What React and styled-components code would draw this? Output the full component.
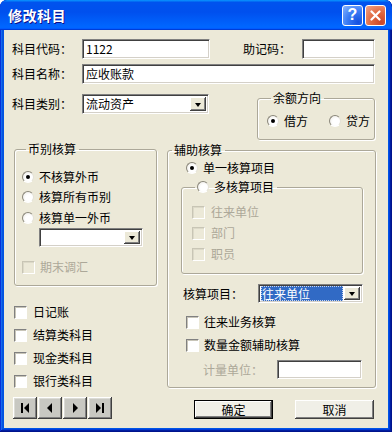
import React from 'react';
import styled, { createGlobalStyle } from 'styled-components';

const GlobalStyle = createGlobalStyle`
  html, body {
    margin: 0;
    padding: 0;
    background: #ffffff;
  }
  body {
    font-family: "Noto Sans CJK SC", "Liberation Sans", sans-serif;
    font-size: 12px;
  }
  * {
    box-sizing: border-box;
  }
`;

const Window = styled.div`
  width: 392px;
  height: 432px;
  display: flex;
  flex-direction: column;
  background: #0055e5;
  border-radius: 7px 7px 0 0;
  overflow: hidden;
  box-shadow: inset -1px -1px #00138c, inset 1px 1px #0831d9, inset -2px -2px #001ea0,
    inset 2px 2px #166aee, inset -3px -3px #003bda, inset 3px 3px #0855dd;
`;

const TitleBar = styled.div`
  height: 30px;
  flex: none;
  display: flex;
  align-items: center;
  padding: 0 6px 0 8px;
  background: linear-gradient(180deg, #0997ff, #0053ee 8%, #0050ee 40%, #06f 88%, #06f 93%, #005bff 95%, #003dd7 96%, #003dd7);
  border-radius: 7px 7px 0 0;
`;

const Title = styled.span`
  flex: 1;
  color: #fff;
  font-size: 14px;
  font-weight: 700;
  letter-spacing: 0.5px;
  text-shadow: 1px 1px #0f1089;
`;

const CapButton = styled.div`
  width: 21px;
  height: 21px;
  margin-left: 2px;
  border: 1px solid #fff;
  border-radius: 3px;
  display: flex;
  align-items: center;
  justify-content: center;
  color: #fff;
  font-family: "Liberation Sans", sans-serif;
  font-weight: 700;
  font-size: 16px;
  background: ${({ $close }) =>
    $close
      ? 'radial-gradient(circle at 80% 85%, #cc4628 0%, #e0683f 45%, #f0a58a 100%)'
      : 'radial-gradient(circle at 80% 85%, #1450e0 0%, #3a7cf5 50%, #8ab6ff 100%)'};
`;

const Client = styled.div`
  flex: 1;
  margin: 0 4px 4px;
  background: #ece9d8;
  color: #000;
  display: flex;
  flex-direction: column;
`;

const Row = styled.div`
  display: flex;
  align-items: center;
  height: ${({ $h }) => $h || 20}px;
  margin-top: ${({ $mt }) => $mt || 0}px;
  padding-left: ${({ $pl }) => $pl || 0}px;
  flex: none;
`;

const Label = styled.span`
  width: ${({ $w }) => ($w ? `${$w}px` : 'auto')};
  margin-left: ${({ $ml }) => $ml || 0}px;
  color: ${({ $disabled }) => ($disabled ? '#aca899' : '#000')};
  white-space: nowrap;
  line-height: 14px;
`;

const TextInput = styled.div`
  width: ${({ $w }) => $w}px;
  height: ${({ $h }) => $h || 20}px;
  margin-left: ${({ $ml }) => $ml || 0}px;
  background: #fff;
  border-top: 1px solid #808080;
  border-left: 1px solid #808080;
  border-right: 1px solid #fff;
  border-bottom: 1px solid #fff;
  box-shadow: inset 1px 1px #404040, inset -1px -1px #d4d0c8;
  padding: 0 3px;
  display: flex;
  align-items: center;
  font-size: 12px;
  line-height: 14px;
`;

const ComboBox = styled(TextInput)`
  padding: 2px;
  justify-content: space-between;
`;

const ComboValue = styled.span`
  flex: 1;
  align-self: stretch;
  display: flex;
  align-items: center;
  padding: 0 1px;
  margin: -1px 0;
  font-size: 12px;
  line-height: 12px;
  white-space: nowrap;
  ${({ $selected }) =>
    $selected &&
    `
    background: #316ac5;
    color: #fff;
    outline: 1px dotted #c9d6ee;
    outline-offset: -1px;
  `}
`;

const ComboArrow = styled.span`
  width: 16px;
  align-self: stretch;
  margin-left: 1px;
  background: #ece9d8;
  box-shadow: inset -1px -1px #404040, inset 1px 1px #fff, inset -2px -2px #808080, inset 2px 2px #ece9d8;
  display: flex;
  align-items: center;
  justify-content: center;
  &::after {
    content: '';
    border-left: 3.5px solid transparent;
    border-right: 3.5px solid transparent;
    border-top: 4px solid #000;
    margin-top: 1px;
  }
`;

const Combo = ({ w, h, ml, value, selected }) => (
  <ComboBox $w={w} $h={h} $ml={ml}>
    <ComboValue $selected={selected}>{value}</ComboValue>
    <ComboArrow />
  </ComboBox>
);

const Group = styled.fieldset`
  margin: ${({ $mt }) => $mt || 0}px 0 0 ${({ $ml }) => $ml || 0}px;
  width: ${({ $w }) => $w}px;
  height: ${({ $h }) => $h}px;
  min-inline-size: 0;
  padding: ${({ $pad }) => $pad || '0'};
  border: 1px solid #aca899;
  border-radius: 3px;
  box-shadow: 1px 1px #fff, inset 1px 1px #fff;
  display: flex;
  flex-direction: column;
  flex: none;
`;

const Legend = styled.legend`
  margin-left: ${({ $ml }) => $ml || 4}px;
  padding: 0 3px 0 2px;
  line-height: 14px;
  font-size: 12px;
  display: flex;
  align-items: center;
`;

const RadioCircle = styled.span`
  width: 12px;
  height: 12px;
  flex: none;
  border-radius: 50%;
  background: radial-gradient(circle at 60% 60%, #ffffff 40%, #e8e6de 100%);
  border: 1px solid;
  border-color: #8a877a #e4e2d8 #ffffff #8a877a;
  display: flex;
  align-items: center;
  justify-content: center;
  margin-right: 5px;
  &::after {
    content: '';
    width: 4px;
    height: 4px;
    border-radius: 50%;
    background: ${({ $on }) => ($on ? '#000' : 'transparent')};
  }
`;

const CheckSquare = styled.span`
  width: 13px;
  height: 13px;
  flex: none;
  background: ${({ $disabled }) => ($disabled ? '#ece9d8' : '#fff')};
  border-top: 1px solid ${({ $disabled }) => ($disabled ? '#c8c5b5' : '#808080')};
  border-left: 1px solid ${({ $disabled }) => ($disabled ? '#c8c5b5' : '#808080')};
  border-right: 1px solid #fff;
  border-bottom: 1px solid #fff;
  box-shadow: inset 1px 1px ${({ $disabled }) => ($disabled ? '#dcd9c8' : '#c8c5b8')};
  margin-right: ${({ $gap }) => $gap || 6}px;
`;

const Radio = ({ on, children, ml, mt }) => (
  <Row $pl={ml} $mt={mt}>
    <RadioCircle $on={on} />
    <Label>{children}</Label>
  </Row>
);

const Check = ({ disabled, children, ml, mt, gap }) => (
  <Row $pl={ml} $mt={mt}>
    <CheckSquare $disabled={disabled} $gap={gap} />
    <Label $disabled={disabled}>{children}</Label>
  </Row>
);

const TopRow = styled.div`
  display: flex;
  align-items: flex-start;
  margin-top: 7px;
  padding-left: 8px;
  flex: none;
`;

const Lower = styled.div`
  display: flex;
  align-items: flex-start;
  margin-top: 2px;
  padding-left: 10px;
  flex: 1;
`;

const Column = styled.div`
  display: flex;
  flex-direction: column;
  width: ${({ $w }) => $w}px;
  margin-left: ${({ $ml }) => $ml || 0}px;
  margin-top: ${({ $mt }) => $mt || 0}px;
`;

const NavBar = styled.div`
  display: flex;
  gap: 1px;
  margin-top: 6px;
  margin-left: -1px;
`;

const NavButton = styled.div`
  width: 24px;
  height: 22px;
  background: #c8c8c2;
  box-shadow: inset -1px -1px #404040, inset 1px 1px #fff, inset -2px -2px #808080, inset 2px 2px #dcdcd6;
  display: flex;
  align-items: center;
  justify-content: center;
`;

const ButtonRow = styled.div`
  display: flex;
  margin-top: 12px;
  padding-left: 27px;
  gap: 22px;
`;

const DlgButton = styled.div`
  width: 79px;
  height: 19px;
  background: #f0efe7;
  display: flex;
  align-items: center;
  justify-content: center;
  font-size: 12px;
  box-shadow: ${({ $default }) =>
    $default
      ? 'inset 0 0 0 1px #000, inset -2px -2px #404040, inset 2px 2px #fff, inset -3px -3px #808080'
      : 'inset -1px -1px #404040, inset 1px 1px #fff, inset -2px -2px #808080, inset 2px 2px #f0efe7'};
`;

const NavIcon = ({ kind }) => {
  const shapes = {
    first: (
      <>
        <rect x="1" y="1" width="2" height="10" />
        <polygon points="9,1 4,6 9,11" />
      </>
    ),
    prev: <polygon points="7,1 2,6 7,11" />,
    next: <polygon points="3,1 8,6 3,11" />,
    last: (
      <>
        <polygon points="1,1 6,6 1,11" />
        <rect x="7" y="1" width="2" height="10" />
      </>
    ),
  };
  return (
    <svg width="10" height="12" viewBox="0 0 10 12" fill="#000">
      {shapes[kind]}
    </svg>
  );
};

export default function App() {
  return (
    <>
      <GlobalStyle />
      <Window>
        <TitleBar>
          <Title>修改科目</Title>
          <CapButton>?</CapButton>
          <CapButton $close>
            <svg width="11" height="11" viewBox="0 0 11 11">
              <path d="M1.5 1.5 L9.5 9.5 M9.5 1.5 L1.5 9.5" stroke="#fff" strokeWidth="2.2" strokeLinecap="round" />
            </svg>
          </CapButton>
        </TitleBar>
        <Client>
          <Row $mt={9} $pl={8}>
            <Label $w={70}>科目代码：</Label>
            <TextInput $w={128}>1122</TextInput>
            <Label $ml={33} $w={59}>助记码：</Label>
            <TextInput $w={73} />
          </Row>
          <Row $mt={5} $pl={8}>
            <Label $w={70}>科目名称：</Label>
            <TextInput $w={293}>应收账款</TextInput>
          </Row>
          <TopRow>
            <Row $mt={3}>
              <Label $w={70}>科目类别：</Label>
              <Combo w={127} value="流动资产" />
            </Row>
            <Group $ml={48} $w={118} $h={49} $pad="6px 0 0 9px">
              <Legend>余额方向</Legend>
              <Row>
                <RadioCircle $on />
                <Label $w={45}>借方</Label>
                <RadioCircle />
                <Label>贷方</Label>
              </Row>
            </Group>
          </TopRow>
          <Lower>
            <Column $w={143}>
              <Group $w={143} $h={144} $pad="11px 0 0 7px">
                <Legend>币别核算</Legend>
                <Radio on>不核算外币</Radio>
                <Radio>核算所有币别</Radio>
                <Radio mt={1}>核算单一外币</Radio>
                <Combo w={104} h={19} ml={17} value="" />
                <Check disabled mt={10} gap={5}>期末调汇</Check>
              </Group>
              <Check mt={16} ml={-1}>日记账</Check>
              <Check mt={3} ml={-1}>结算类科目</Check>
              <Check mt={3} ml={-1}>现金类科目</Check>
              <Check mt={3} ml={-1}>银行类科目</Check>
              <NavBar>
                <NavButton><NavIcon kind="first" /></NavButton>
                <NavButton><NavIcon kind="prev" /></NavButton>
                <NavButton><NavIcon kind="next" /></NavButton>
                <NavButton><NavIcon kind="last" /></NavButton>
              </NavBar>
            </Column>
            <Column $w={209} $ml={10} $mt={1}>
              <Group $w={209} $h={245} $pad="1px 0 0 0">
                <Legend>辅助核算</Legend>
                <Radio on ml={18}>单一核算项目</Radio>
                <Group $ml={13} $mt={2} $w={182} $h={94} $pad="8px 0 0 10px">
                  <Legend $ml={3}>
                    <RadioCircle />
                    多核算项目
                  </Legend>
                  <Check disabled gap={6}>往来单位</Check>
                  <Check disabled mt={1} gap={6}>部门</Check>
                  <Check disabled mt={1} gap={6}>职员</Check>
                </Group>
                <Row $mt={10} $h={19} $pl={15}>
                  <Label $w={75}>核算项目：</Label>
                  <Combo w={105} h={19} value="往来单位" selected />
                </Row>
                <Check mt={9} ml={18} gap={5}>往来业务核算</Check>
                <Check mt={3} ml={18} gap={5}>数量金额辅助核算</Check>
                <Row $mt={5} $h={19} $pl={35}>
                  <Label $w={74} $disabled>计量单位：</Label>
                  <TextInput $w={85} $h={19} />
                </Row>
              </Group>
              <ButtonRow>
                <DlgButton $default>确定</DlgButton>
                <DlgButton>取消</DlgButton>
              </ButtonRow>
            </Column>
          </Lower>
        </Client>
      </Window>
    </>
  );
}
